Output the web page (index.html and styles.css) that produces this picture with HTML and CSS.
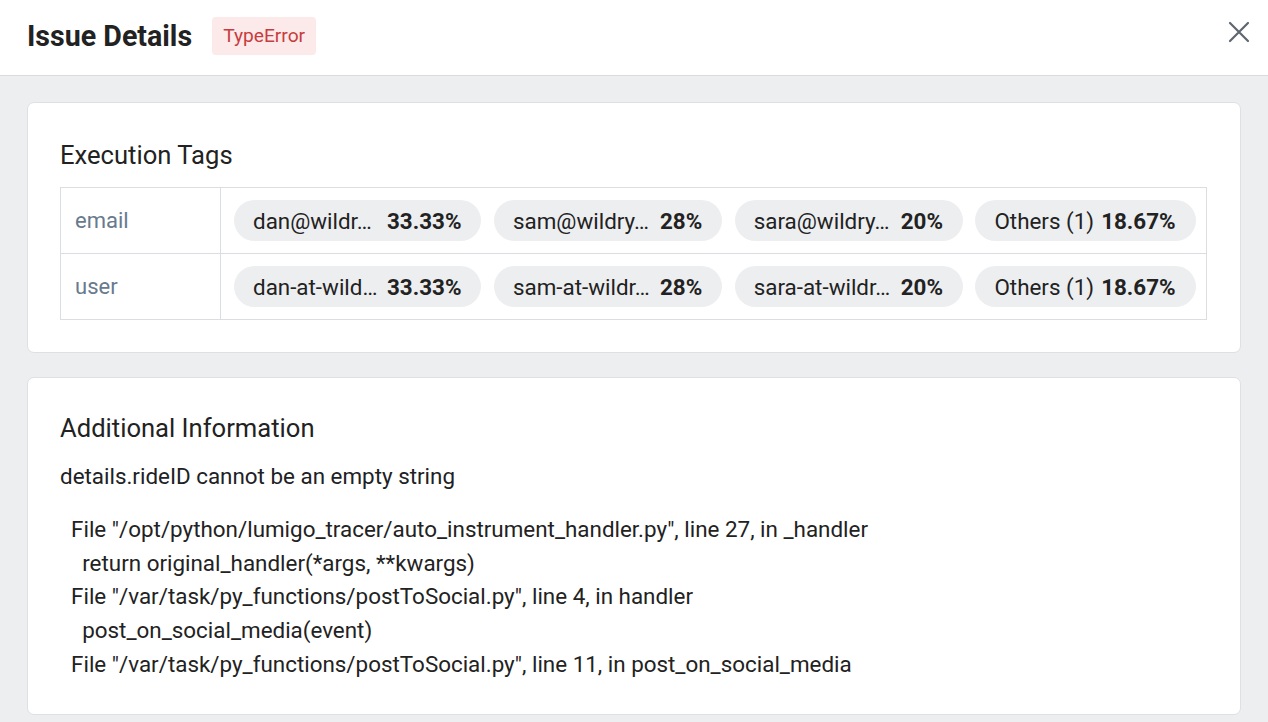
FILE: index.html
```html
<!DOCTYPE html>
<html>
<head>
<meta charset="utf-8">
<link rel="stylesheet" href="styles.css">
</head>
<body>
<div class="page">
  <header class="header">
    <div class="header-left">
      <h1 class="title">Issue Details</h1>
      <span class="badge">TypeError</span>
    </div>
    <button class="close" aria-label="Close">
      <svg width="22" height="22" viewBox="0 0 22 22"><path d="M2 2 L20 20 M20 2 L2 20" stroke="#5f6670" stroke-width="2.2" stroke-linecap="round" fill="none"/></svg>
    </button>
  </header>
  <main class="content">
    <section class="card">
      <h2 class="card-title tags-title">Execution Tags</h2>
      <div class="tags-table">
        <div class="tag-row">
          <div class="tag-key">email</div>
          <div class="tag-values">
            <span class="chip" title="dan@wildrydes.com"><span class="chip-name n1">dan@wildr…</span><b>33.33%</b></span>
            <span class="chip" title="sam@wildrydes.com"><span class="chip-name n2">sam@wildry…</span><b>28%</b></span>
            <span class="chip" title="sara@wildrydes.com"><span class="chip-name n2">sara@wildry…</span><b>20%</b></span>
            <span class="chip"><span class="chip-other">Others (1)</span><b>18.67%</b></span>
          </div>
        </div>
        <div class="tag-row">
          <div class="tag-key">user</div>
          <div class="tag-values">
            <span class="chip" title="dan-at-wildrydes.com"><span class="chip-name n1">dan-at-wild…</span><b>33.33%</b></span>
            <span class="chip" title="sam-at-wildrydes.com"><span class="chip-name n2">sam-at-wildr…</span><b>28%</b></span>
            <span class="chip" title="sara-at-wildrydes.com"><span class="chip-name n2">sara-at-wildr…</span><b>20%</b></span>
            <span class="chip"><span class="chip-other">Others (1)</span><b>18.67%</b></span>
          </div>
        </div>
      </div>
    </section>
    <section class="card">
      <h2 class="card-title info-title">Additional Information</h2>
      <p class="message">details.rideID cannot be an empty string</p>
      <pre class="trace">  File "/opt/python/lumigo_tracer/auto_instrument_handler.py", line 27, in _handler
    return original_handler(*args, **kwargs)
  File "/var/task/py_functions/postToSocial.py", line 4, in handler
    post_on_social_media(event)
  File "/var/task/py_functions/postToSocial.py", line 11, in post_on_social_media</pre>
    </section>
  </main>
</div>
</body>
</html>
```

FILE: styles.css
```css
* { box-sizing: border-box; }
html, body { margin: 0; padding: 0; }
body {
  font-family: Roboto, "Noto Sans", sans-serif;
  color: #202124;
  background: #edeef0;
  width: 1268px;
  height: 722px;
  overflow: hidden;
}
.page { display: flex; flex-direction: column; height: 722px; }
.header {
  height: 76px;
  background: #ffffff;
  border-bottom: 1px solid #d9dadd;
  display: flex;
  align-items: center;
  justify-content: space-between;
  padding: 0 18px 0 27px;
  flex-shrink: 0;
}
.header-left { display: flex; align-items: center; gap: 20px; margin-top: -4px; }
.title {
  margin: 0;
  font-size: 28.6px;
  font-weight: 700;
  color: #222222;
}
.badge {
  background: #fce9ea;
  color: #c73c3e;
  font-size: 19.2px;
  line-height: 38px;
  height: 38px;
  padding: 0 11px;
  border-radius: 4px;
}
.close {
  background: none;
  border: 0;
  padding: 0;
  width: 22px;
  height: 22px;
  display: flex;
  margin-top: -11px;
  cursor: pointer;
}
.content {
  padding: 26px 27px 0 27px;
  display: flex;
  flex-direction: column;
  gap: 24px;
}
.card {
  background: #ffffff;
  border: 1px solid #dfe0e3;
  border-radius: 7px;
  padding: 32px 33px 32px 32px;
}
.card-title {
  margin: 0;
  font-weight: 400;
  font-size: 25.6px;
  color: #222222;
}
.tags-title { line-height: 40px; margin-bottom: 12px; }
.tags-table {
  border: 1px solid #dcdde0;
}
.tag-row {
  display: flex;
  height: 65px;
}
.tag-row + .tag-row { border-top: 1px solid #dcdde0; height: 66px; }
.tag-key {
  width: 160px;
  border-right: 1px solid #dcdde0;
  padding-left: 14px;
  display: flex;
  align-items: center;
  font-size: 22px;
  color: #677a8e;
}
.tag-values {
  display: flex;
  align-items: center;
  gap: 12.5px;
  padding-left: 13px;
}
.chip {
  display: inline-flex;
  align-items: center;
  height: 41px;
  border-radius: 21px;
  background: #edeef0;
  padding: 0 20px 0 19px;
  font-size: 22.4px;
  color: #222222;
  gap: 12px;
  white-space: nowrap;
}
.chip b { font-weight: 700; }
.chip-name {
  white-space: nowrap;
  display: inline-block;
}
.n1 { width: 122px; }
.n2 { width: 135px; }
.chip-other { margin-right: -5px; }
.info-title { line-height: 36px; }
.message {
  margin: 15px 0 0 0;
  font-size: 22.4px;
  line-height: 30px;
}
.trace {
  margin: 22px 0 0 0;
  font-family: Roboto, "Noto Sans", sans-serif;
  font-size: 22.4px;
  line-height: 33.7px;
  white-space: pre-wrap;
  color: #222222;
}
```
